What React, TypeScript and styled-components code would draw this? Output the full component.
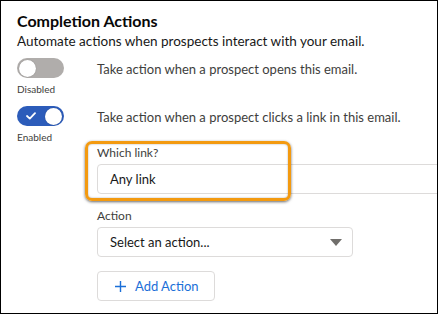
import styled, { createGlobalStyle } from "styled-components";

const GlobalStyle = createGlobalStyle`
    html, body {
        margin: 0;
        padding: 0;
        background: #ffffff;
    }
`;

const Frame = styled.div`
    width: 438px;
    height: 314px;
    box-sizing: border-box;
    border: 1px solid #000000;
    padding: 10px 16px 0 16px;
    overflow: hidden;
    background: #ffffff;
    font-family: Lato, "Open Sans", sans-serif;
    color: #3e3e3c;
`;

const Title = styled.h2`
    margin: 0;
    font-size: 16px;
    line-height: 20px;
    font-weight: 700;
    color: #080707;
`;

const Subtitle = styled.p`
    margin: 1px 0 0 0;
    font-size: 13.5px;
    line-height: 18px;
    color: #181818;
`;

const ToggleRow = styled.div`
    display: flex;
    align-items: flex-start;
    margin-top: ${(p: { $top: number }) => p.$top}px;
`;

const ToggleColumn = styled.div`
    width: 80px;
    flex: none;
    display: flex;
    flex-direction: column;
    align-items: flex-start;
`;

const Track = styled.div<{ $on: boolean }>`
    position: relative;
    width: 47px;
    height: 20px;
    border-radius: 10px;
    box-sizing: border-box;
    background: ${(p) => (p.$on ? "#2c5cba" : "#b0adab")};
    display: flex;
    align-items: center;
    justify-content: ${(p) => (p.$on ? "space-between" : "flex-start")};
    padding: 0 2px 0 ${(p) => (p.$on ? "9px" : "2px")};
`;

const Knob = styled.div`
    width: 17px;
    height: 17px;
    border-radius: 50%;
    background: #ffffff;
    box-shadow: 0 0 1px rgba(0, 0, 0, 0.35);
`;

const ToggleState = styled.span`
    margin-top: 6px;
    font-size: 10px;
    line-height: 10px;
    color: #3e3e3c;
`;

const RowText = styled.span`
    margin-top: 3px;
    font-size: 13px;
    line-height: 16px;
    color: #3e3e3c;
`;

const Details = styled.div`
    margin-left: 80px;
`;

const Field = styled.div`
    position: relative;
    margin-top: ${(p: { $top: number }) => p.$top}px;
`;

const FieldLabel = styled.div`
    font-size: 12px;
    line-height: 14px;
    color: #3e3e3c;
`;

const TextInput = styled.div`
    margin-top: 4px;
    width: 360px;
    height: 30px;
    box-sizing: border-box;
    border: 1px solid #dddbda;
    border-radius: 4px;
    display: flex;
    align-items: center;
    padding-left: 12px;
    font-size: 13px;
    color: #181818;
`;

const SelectBox = styled(TextInput)`
    width: 256px;
    justify-content: space-between;
    padding-right: 10px;
`;

const Highlight = styled.div`
    position: absolute;
    left: -12px;
    top: -5px;
    width: 206px;
    height: 60px;
    box-sizing: border-box;
    border: 3px solid #f39a10;
    border-radius: 7px;
    box-shadow: 0 1px 3px rgba(0, 0, 0, 0.6), inset 0 0 2px rgba(0, 0, 0, 0.35);
    pointer-events: none;
`;

const AddButton = styled.button`
    margin-top: 14px;
    height: 30px;
    box-sizing: border-box;
    border: 1px solid #dddbda;
    border-radius: 4px;
    background: #ffffff;
    display: flex;
    align-items: center;
    gap: 9px;
    padding: 0 15px 0 17px;
    font-family: inherit;
    font-size: 13px;
    color: #1b6fd8;
`;

function Toggle({ on }: { on: boolean }) {
    return (
        <ToggleColumn>
            <Track $on={on}>
                {on && (
                    <svg width="10" height="8" viewBox="0 0 10 8">
                        <path d="M1 4 L3.8 6.6 L9 1.2" stroke="#ffffff" strokeWidth="1.8" fill="none" strokeLinecap="round" strokeLinejoin="round" />
                    </svg>
                )}
                <Knob />
            </Track>
            <ToggleState>{on ? "Enabled" : "Disabled"}</ToggleState>
        </ToggleColumn>
    );
}

export default function App() {
    return (
        <>
            <GlobalStyle />
            <Frame>
                <Title>Completion Actions</Title>
                <Subtitle>Automate actions when prospects interact with your email.</Subtitle>

                <ToggleRow $top={8}>
                    <Toggle on={false} />
                    <RowText>Take action when a prospect opens this email.</RowText>
                </ToggleRow>

                <ToggleRow $top={12}>
                    <Toggle on={true} />
                    <RowText>Take action when a prospect clicks a link in this email.</RowText>
                </ToggleRow>

                <Details>
                    <Field $top={4}>
                        <FieldLabel>Which link?</FieldLabel>
                        <TextInput>Any link</TextInput>
                        <Highlight />
                    </Field>

                    <Field $top={15}>
                        <FieldLabel>Action</FieldLabel>
                        <SelectBox>
                            Select an action...
                            <svg width="12" height="7" viewBox="0 0 12 7">
                                <path d="M0 0 H12 L6 7 Z" fill="#706e6b" />
                            </svg>
                        </SelectBox>
                    </Field>

                    <AddButton>
                        <svg width="11" height="11" viewBox="0 0 11 11">
                            <path d="M5.5 0 V11 M0 5.5 H11" stroke="#1b6fd8" strokeWidth="1.4" />
                        </svg>
                        Add Action
                    </AddButton>
                </Details>
            </Frame>
        </>
    );
}
